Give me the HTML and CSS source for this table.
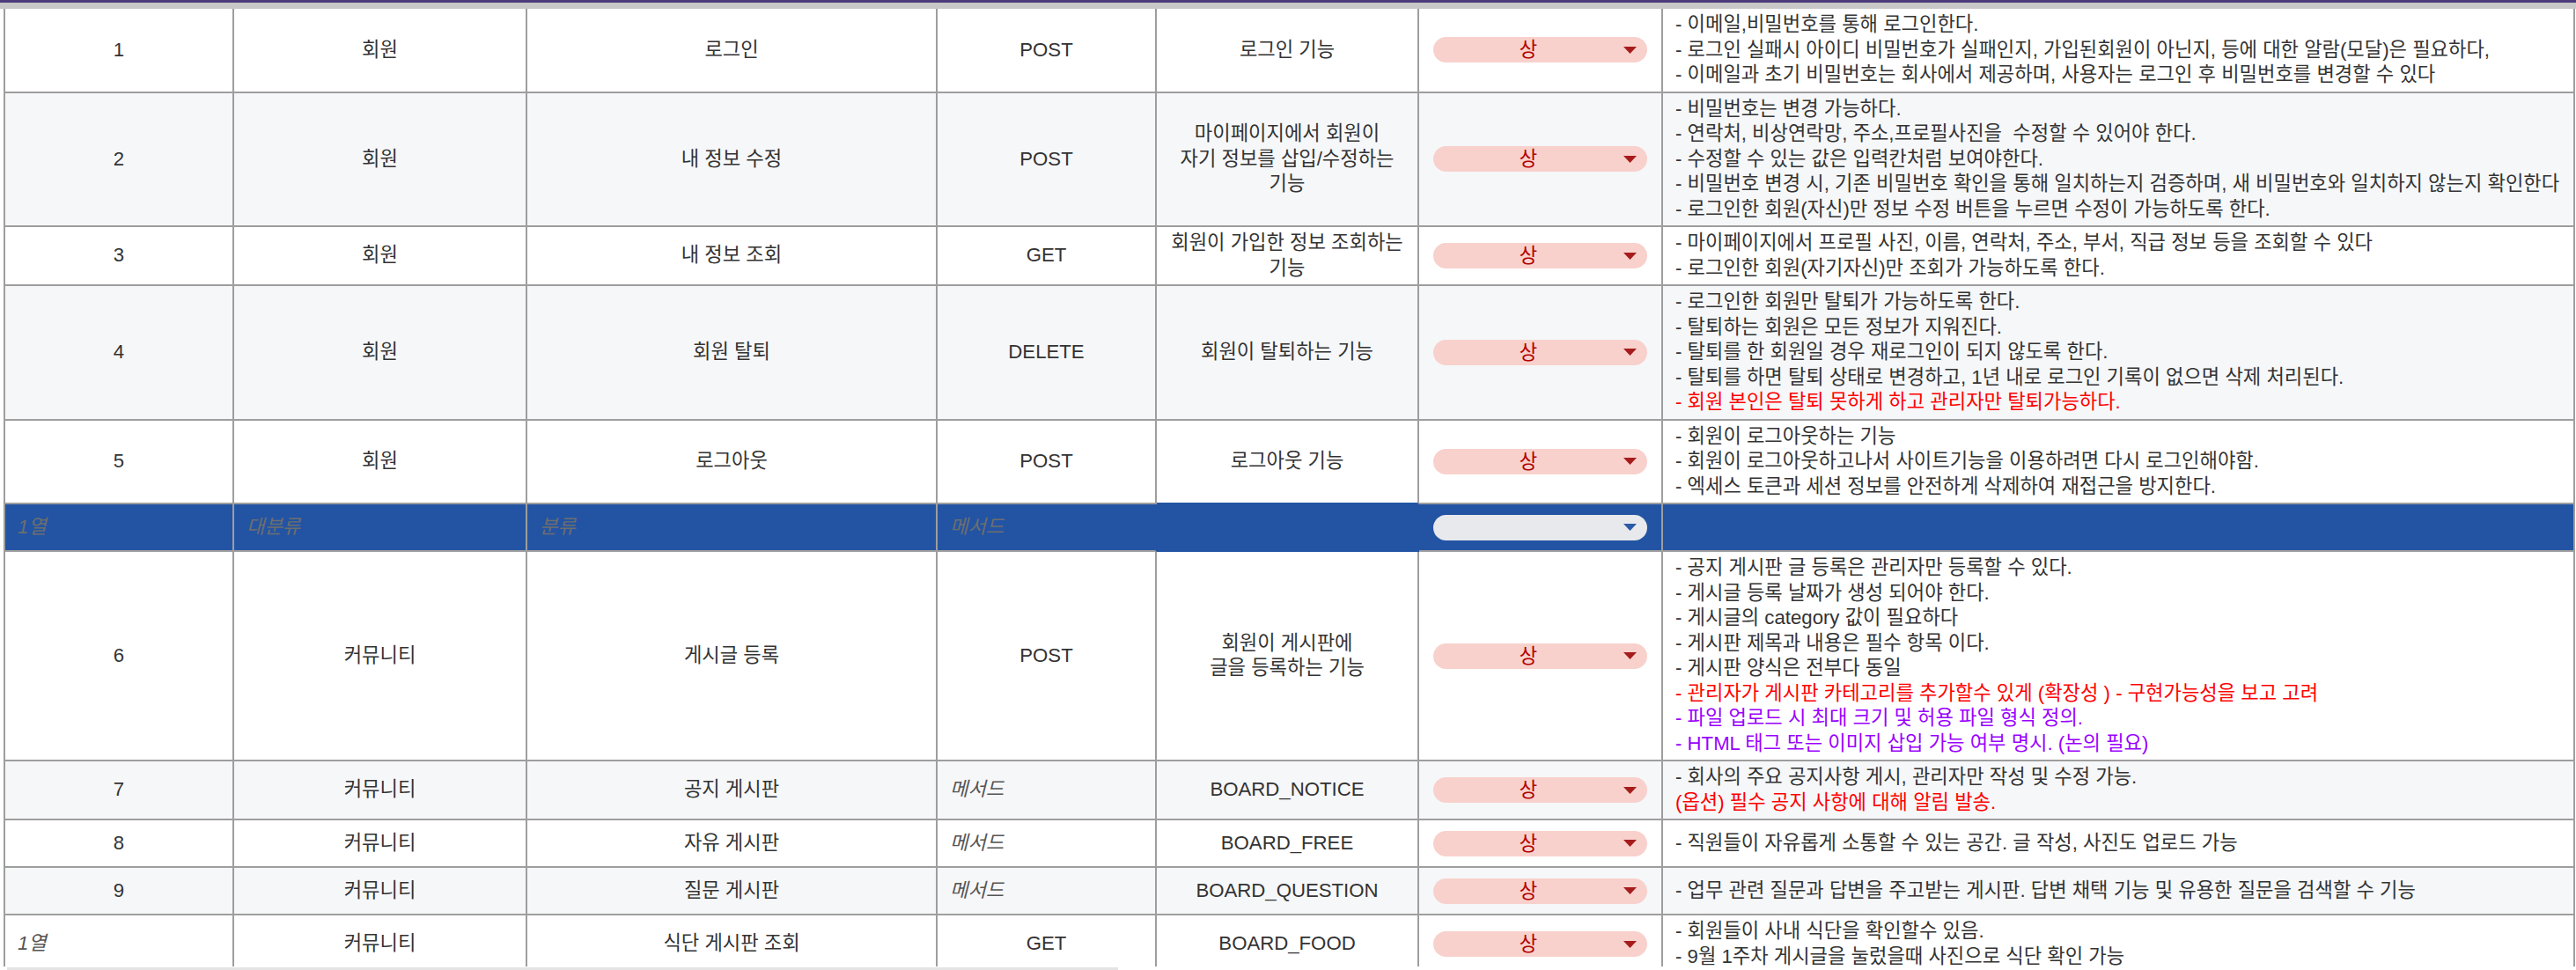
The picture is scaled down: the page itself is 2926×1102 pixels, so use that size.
FILE: index.html
```html
<!DOCTYPE html>
<html lang="ko">
<head>
<meta charset="utf-8">
<title>요구사항 정의</title>
<link rel="stylesheet" href="styles.css">
</head>
<body>
<div class="topbar"></div>
<div class="band"></div>
<div class="sheet">
  <div class="row">
    <div class="c">1</div><div class="c">회원</div><div class="c">로그인</div><div class="c">POST</div><div class="c">로그인 기능</div>
    <div class="c"><div class="pill"><span class="lbl">상</span><svg viewBox="0 0 15 8"><polygon points="0,0 15,0 7.5,8" fill="#a61c1c"/></svg></div></div>
    <div class="c desc">
      <div>- 이메일,비밀번호를 통해 로그인한다.</div>
      <div>- 로그인 실패시 아이디 비밀번호가 실패인지, 가입된회원이 아닌지, 등에 대한 알람(모달)은 필요하다,</div>
      <div>- 이메일과 초기 비밀번호는 회사에서 제공하며, 사용자는 로그인 후 비밀번호를 변경할 수 있다</div>
    </div>
  </div>
  <div class="row alt">
    <div class="c">2</div><div class="c">회원</div><div class="c">내 정보 수정</div><div class="c">POST</div><div class="c">마이페이지에서 회원이<br>자기 정보를 삽입/수정하는<br>기능</div>
    <div class="c"><div class="pill"><span class="lbl">상</span><svg viewBox="0 0 15 8"><polygon points="0,0 15,0 7.5,8" fill="#a61c1c"/></svg></div></div>
    <div class="c desc">
      <div>- 비밀번호는 변경 가능하다.</div>
      <div>- 연락처, 비상연락망, 주소,프로필사진을&nbsp; 수정할 수 있어야 한다.</div>
      <div>- 수정할 수 있는 값은 입력칸처럼 보여야한다.</div>
      <div>- 비밀번호 변경 시, 기존 비밀번호 확인을 통해 일치하는지 검증하며, 새 비밀번호와 일치하지 않는지 확인한다</div>
      <div>- 로그인한 회원(자신)만 정보 수정 버튼을 누르면 수정이 가능하도록 한다.</div>
    </div>
  </div>
  <div class="row">
    <div class="c">3</div><div class="c">회원</div><div class="c">내 정보 조회</div><div class="c">GET</div><div class="c">회원이 가입한 정보 조회하는<br>기능</div>
    <div class="c"><div class="pill"><span class="lbl">상</span><svg viewBox="0 0 15 8"><polygon points="0,0 15,0 7.5,8" fill="#a61c1c"/></svg></div></div>
    <div class="c desc">
      <div>- 마이페이지에서 프로필 사진, 이름, 연락처, 주소, 부서, 직급 정보 등을 조회할 수 있다</div>
      <div>- 로그인한 회원(자기자신)만 조회가 가능하도록 한다.</div>
    </div>
  </div>
  <div class="row alt">
    <div class="c">4</div><div class="c">회원</div><div class="c">회원 탈퇴</div><div class="c">DELETE</div><div class="c">회원이 탈퇴하는 기능</div>
    <div class="c"><div class="pill"><span class="lbl">상</span><svg viewBox="0 0 15 8"><polygon points="0,0 15,0 7.5,8" fill="#a61c1c"/></svg></div></div>
    <div class="c desc">
      <div>- 로그인한 회원만 탈퇴가 가능하도록 한다.</div>
      <div>- 탈퇴하는 회원은 모든 정보가 지워진다.</div>
      <div>- 탈퇴를 한 회원일 경우 재로그인이 되지 않도록 한다.</div>
      <div>- 탈퇴를 하면 탈퇴 상태로 변경하고, 1년 내로 로그인 기록이 없으면 삭제 처리된다.</div>
      <div class="red">- 회원 본인은 탈퇴 못하게 하고 관리자만 탈퇴가능하다.</div>
    </div>
  </div>
  <div class="row">
    <div class="c">5</div><div class="c">회원</div><div class="c">로그아웃</div><div class="c">POST</div><div class="c bb">로그아웃 기능</div>
    <div class="c"><div class="pill"><span class="lbl">상</span><svg viewBox="0 0 15 8"><polygon points="0,0 15,0 7.5,8" fill="#a61c1c"/></svg></div></div>
    <div class="c desc">
      <div>- 회원이 로그아웃하는 기능</div>
      <div>- 회원이 로그아웃하고나서 사이트기능을 이용하려면 다시 로그인해야함.</div>
      <div>- 엑세스 토큰과 세션 정보를 안전하게 삭제하여 재접근을 방지한다.</div>
    </div>
  </div>
  <div class="row blue">
    <div class="c left ph">1열</div><div class="c left ph">대분류</div><div class="c left ph">분류</div><div class="c left ph nr">메서드</div><div class="c nr bb"></div>
    <div class="c"><div class="pill empty"><span class="lbl"></span><svg viewBox="0 0 15 8"><polygon points="0,0 15,0 7.5,8" fill="#2b5aa6"/></svg></div></div>
    <div class="c desc"></div>
  </div>
  <div class="row">
    <div class="c">6</div><div class="c">커뮤니티</div><div class="c">게시글 등록</div><div class="c">POST</div><div class="c">회원이 게시판에<br>글을 등록하는 기능</div>
    <div class="c"><div class="pill"><span class="lbl">상</span><svg viewBox="0 0 15 8"><polygon points="0,0 15,0 7.5,8" fill="#a61c1c"/></svg></div></div>
    <div class="c desc">
      <div>- 공지 게시판 글 등록은 관리자만 등록할 수 있다.</div>
      <div>- 게시글 등록 날짜가 생성 되어야 한다.</div>
      <div>- 게시글의 category 값이 필요하다</div>
      <div>- 게시판 제목과 내용은 필수 항목 이다.</div>
      <div>- 게시판 양식은 전부다 동일</div>
      <div class="red">- 관리자가 게시판 카테고리를 추가할수 있게 (확장성 ) - 구현가능성을 보고 고려</div>
      <div class="purple">- 파일 업로드 시 최대 크기 및 허용 파일 형식 정의.</div>
      <div class="purple">- HTML 태그 또는 이미지 삽입 가능 여부 명시. (논의 필요)</div>
    </div>
  </div>
  <div class="row alt">
    <div class="c">7</div><div class="c">커뮤니티</div><div class="c">공지 게시판</div><div class="c left ph dk">메서드</div><div class="c">BOARD_NOTICE</div>
    <div class="c"><div class="pill"><span class="lbl">상</span><svg viewBox="0 0 15 8"><polygon points="0,0 15,0 7.5,8" fill="#a61c1c"/></svg></div></div>
    <div class="c desc">
      <div>- 회사의 주요 공지사항 게시, 관리자만 작성 및 수정 가능.</div>
      <div class="red">(옵션) 필수 공지 사항에 대해 알림 발송.</div>
    </div>
  </div>
  <div class="row">
    <div class="c">8</div><div class="c">커뮤니티</div><div class="c">자유 게시판</div><div class="c left ph dk">메서드</div><div class="c">BOARD_FREE</div>
    <div class="c"><div class="pill"><span class="lbl">상</span><svg viewBox="0 0 15 8"><polygon points="0,0 15,0 7.5,8" fill="#a61c1c"/></svg></div></div>
    <div class="c desc">
      <div>- 직원들이 자유롭게 소통할 수 있는 공간. 글 작성, 사진도 업로드 가능</div>
    </div>
  </div>
  <div class="row alt">
    <div class="c">9</div><div class="c">커뮤니티</div><div class="c">질문 게시판</div><div class="c left ph dk">메서드</div><div class="c">BOARD_QUESTION</div>
    <div class="c"><div class="pill"><span class="lbl">상</span><svg viewBox="0 0 15 8"><polygon points="0,0 15,0 7.5,8" fill="#a61c1c"/></svg></div></div>
    <div class="c desc">
      <div>- 업무 관련 질문과 답변을 주고받는 게시판. 답변 채택 기능 및 유용한 질문을 검색할 수 기능</div>
    </div>
  </div>
  <div class="row">
    <div class="c left ph dk">1열</div><div class="c">커뮤니티</div><div class="c">식단 게시판 조회</div><div class="c">GET</div><div class="c">BOARD_FOOD</div>
    <div class="c"><div class="pill"><span class="lbl">상</span><svg viewBox="0 0 15 8"><polygon points="0,0 15,0 7.5,8" fill="#a61c1c"/></svg></div></div>
    <div class="c desc">
      <div>- 회원들이 사내 식단을 확인할수 있음.</div>
      <div>- 9월 1주차 게시글을 눌렀을때 사진으로 식단 확인 가능</div>
    </div>
  </div>
</div>
<div class="hscroll"><div class="thumb"></div></div>
</body>
</html>
```

FILE: styles.css
```css
* { box-sizing: border-box; }

html, body {
  margin: 0;
  padding: 0;
  background: #ffffff;
  overflow: hidden;
}

body {
  position: relative;
  width: 2926px;
  height: 1102px;
  font-family: "Liberation Sans", "Noto Sans CJK KR", sans-serif;
  font-size: 22.2px;
  color: #333333;
}

.topbar {
  height: 3px;
  background: #4b3b7b;
}

.band {
  height: 7px;
  background: #c8c8c8;
}

.sheet {
  margin-left: 4px;
  border-left: 2px solid #9e9e9e;
  display: grid;
  grid-template-columns: 260px 333px 466px 249px 298px 277px 1036px;
}

.row { display: contents; }

.c {
  min-height: 54px;
  padding: 4px 6px;
  border-right: 2px solid #9e9e9e;
  border-bottom: 2px solid #9e9e9e;
  line-height: 28.5px;
  display: flex;
  align-items: center;
  justify-content: center;
  text-align: center;
  white-space: nowrap;
  overflow: hidden;
  background: #ffffff;
}

.row.alt > .c { background: #f6f7f9; }

.c.desc {
  flex-direction: column;
  align-items: flex-start;
  justify-content: center;
  text-align: left;
  padding-left: 14px;
  padding-right: 0;
}

.c.left {
  justify-content: flex-start;
  padding-left: 14px;
}

.ph {
  font-style: italic;
  color: #6e6e6e;
}

.ph.dk { color: #555555; }

.row.blue > .c { background: #2354a3; }
.row.blue > .c.nr { border-right-color: #2354a3; }
.c.bb { border-bottom-color: #2354a3; }

.red { color: #ff0000; }
.purple { color: #9900ff; }

.pill {
  width: 243px;
  height: 29px;
  border-radius: 15px;
  background: #f8d1cc;
  color: #b10202;
  display: flex;
  align-items: center;
  padding-right: 12px;
  line-height: 29px;
}

.pill .lbl {
  flex: 1;
  text-align: center;
}

.pill svg {
  width: 15px;
  height: 8px;
  display: block;
}

.pill.empty { background: #e8e9ec; }

.hscroll {
  position: absolute;
  left: 0;
  right: 0;
  bottom: 0;
  height: 4px;
  background: #ffffff;
}

.hscroll .thumb {
  margin-left: 8px;
  width: 1262px;
  height: 3px;
  margin-top: 1px;
  background: #e4e4e4;
}
```
